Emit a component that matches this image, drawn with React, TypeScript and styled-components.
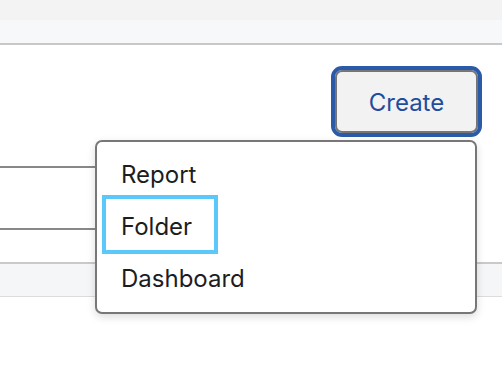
import React from 'react';
import styled, { createGlobalStyle } from 'styled-components';

const GlobalStyle = createGlobalStyle`
  html, body {
    margin: 0;
    padding: 0;
    background: #fff;
    font-family: 'Inter', 'Liberation Sans', sans-serif;
  }
  * { box-sizing: border-box; }
`;

const Page = styled.div`
  position: relative;
  width: 502px;
  height: 386px;
  overflow: hidden;
`;

const TopStrip = styled.div`
  height: 20px;
  background: #f3f3f3;
`;

const SubBar = styled.div`
  height: 25px;
  background: #f7f8fa;
  border-bottom: 2px solid #c8c8c8;
`;

const Toolbar = styled.div`
  display: flex;
  justify-content: flex-end;
  padding: 25px 24px 0 0;
`;

const CreateButton = styled.button`
  width: 143px;
  height: 63px;
  border: 2px solid #767676;
  border-radius: 7px;
  background: #f2f2f2;
  outline: 4px solid #2b5ba8;
  outline-offset: 0;
  color: #1f4d9e;
  font-family: inherit;
  font-size: 24px;
  padding: 2px 0 0 0;
  cursor: pointer;
`;

const Field = styled.div`
  width: 320px;
  height: 64px;
  margin-top: 33px;
  border-top: 2px solid #888;
  border-bottom: 2px solid #888;
`;

const Band = styled.div`
  height: 35px;
  margin-top: 32px;
  background: #f5f6f8;
  border-top: 2px solid #c9c9c9;
  border-bottom: 1px solid #dcdcdc;
`;

const Menu = styled.div`
  position: absolute;
  left: 95px;
  top: 140px;
  width: 382px;
  display: flex;
  flex-direction: column;
  padding: 7px 0;
  background: #fff;
  border: 2px solid #777;
  border-radius: 7px;
  box-shadow: 0 3px 8px rgba(0, 0, 0, 0.14);
`;

const Item = styled.div`
  height: 52px;
  display: flex;
  align-items: flex-start;
  padding-left: 9px;
`;

const Label = styled.span<{ $focused?: boolean }>`
  display: inline-block;
  margin-top: -2px;
  height: 51px;
  padding: 4px 22px 0 15px;
  line-height: 47px;
  font-size: 24px;
  color: #1d1d1f;
  outline: ${p => (p.$focused ? '4px solid #5ac8fa' : 'none')};
  outline-offset: 0;
`;

const items = ['Report', 'Folder', 'Dashboard'];

export default function App() {
  return (
    <Page>
      <GlobalStyle />
      <TopStrip />
      <SubBar />
      <Toolbar>
        <CreateButton>Create</CreateButton>
      </Toolbar>
      <Field />
      <Band />
      <Menu>
        {items.map(name => (
          <Item key={name}>
            <Label $focused={name === 'Folder'}>{name}</Label>
          </Item>
        ))}
      </Menu>
    </Page>
  );
}
